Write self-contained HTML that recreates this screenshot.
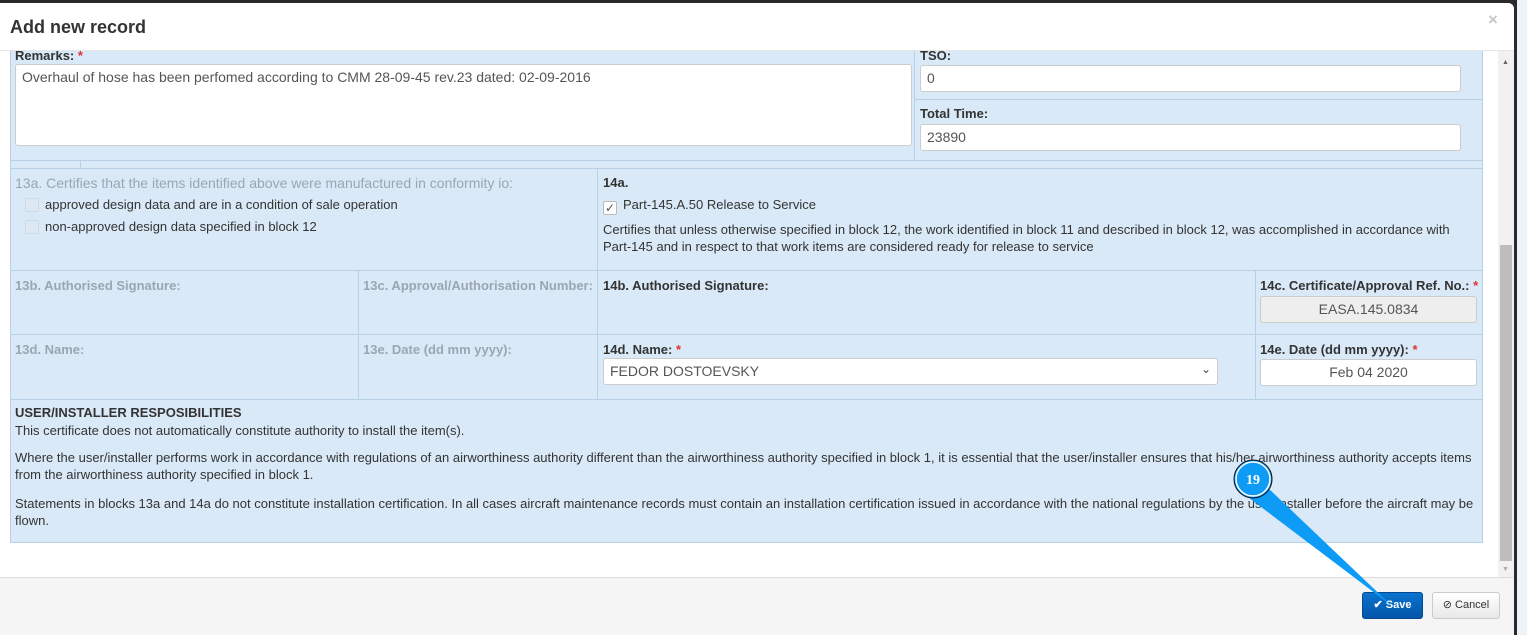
<!DOCTYPE html>
<html><head><meta charset="utf-8"><style>
*{box-sizing:border-box;margin:0;padding:0}
body{width:1527px;height:635px;overflow:hidden;background:#2a2a2a;font-family:"Liberation Sans",Arial,sans-serif;color:#333;position:relative}
.a{position:absolute}
.modal{left:0;top:3px;width:1514px;height:632px;background:#fff;border-top-right-radius:6px;overflow:hidden}
.hdr{left:0;top:0;width:1514px;height:48px;background:#fff;border-bottom:1px solid #e5e5e5;z-index:3}
.panel{left:10px;top:48px;width:1473px;height:492px;background:#d9e9f7;border:1px solid #b7d0e6;border-top:none}
.hl{position:absolute;height:1px;background:#b7d0e6}
.vl{position:absolute;width:1px;background:#b7d0e6}
.lbl{position:absolute;font-size:13px;font-weight:bold;color:#333}
.g{color:#9aa7b2}
.t{position:absolute;font-size:13px;color:#333;line-height:17px}
.inp{position:absolute;background:#fff;border:1px solid #ccc;border-radius:3px;font-size:14px;color:#555;padding:5px 6px;line-height:15px}
.red{color:#d33}
.cb{display:inline-block;width:14px;height:14px;border:1px solid #cfd8e0;background:#dde8f2;vertical-align:-3px;margin-right:6px;border-radius:2px}
</style></head><body>
<div class="a" style="left:1517px;top:0;width:10px;height:635px;background:#eef2f9"></div>
<div class="a modal">
 <div class="a hdr"><div class="a" style="left:10px;top:14px;font-size:18px;font-weight:bold;color:#333">Add new record</div>
 <div class="a" style="left:1488px;top:7px;font-size:17px;color:#c8c8c8;font-weight:bold">×</div></div>
 <div class="a panel">
  <div class="lbl" style="left:4px;top:-3px">Remarks: <span class="red">*</span></div>
  <div class="inp" style="left:4px;top:13px;width:897px;height:82px;">Overhaul of hose has been perfomed according to CMM 28-09-45 rev.23 dated: 02-09-2016</div>
  <div class="vl" style="left:903px;top:0;height:109px"></div>
  <div class="lbl" style="left:909px;top:-3px">TSO:</div>
  <div class="inp" style="left:909px;top:14px;width:541px;height:27px">0</div>
  <div class="hl" style="left:904px;top:48px;width:568px"></div>
  <div class="lbl" style="left:909px;top:55px">Total Time:</div>
  <div class="inp" style="left:909px;top:73px;width:541px;height:27px">23890</div>
  <div class="hl" style="left:0;top:109px;width:1472px"></div>
  <div class="vl" style="left:69px;top:109px;height:8px"></div>
  <div class="hl" style="left:0;top:117px;width:1472px"></div>
  <div class="vl" style="left:586px;top:117px;height:231px"></div>
  <div class="lbl g" style="left:4px;top:124px;font-weight:normal;font-size:14px">13a. Certifies that the items identified above were manufactured in conformity io:</div>
  <div class="t g" style="left:14px;top:145px"><span class="cb"></span>approved design data and are in a condition of sale operation</div>
  <div class="t g" style="left:14px;top:167px"><span class="cb"></span>non-approved design data specified in block 12</div>
  <div class="lbl" style="left:592px;top:124px">14a.</div>
  <div class="t" style="left:592px;top:145px"><span class="cb" style="background:#fff;border-color:#bbb;font-size:12px;line-height:12px;text-align:center;color:#555">✓</span>Part-145.A.50 Release to Service</div>
  <div class="t" style="left:592px;top:170px;width:870px">Certifies that unless otherwise specified in block 12, the work identified in block 11 and described in block 12, was accomplished in accordance with Part-145 and in respect to that work items are considered ready for release to service</div>
  <div class="hl" style="left:0;top:219px;width:1472px"></div>
  <div class="vl" style="left:347px;top:219px;height:129px"></div>
  <div class="vl" style="left:1244px;top:219px;height:129px"></div>
  <div class="lbl g" style="left:4px;top:227px">13b. Authorised Signature:</div>
  <div class="lbl g" style="left:352px;top:227px">13c. Approval/Authorisation Number:</div>
  <div class="lbl" style="left:592px;top:227px">14b. Authorised Signature:</div>
  <div class="lbl" style="left:1249px;top:227px">14c. Certificate/Approval Ref. No.: <span class="red">*</span></div>
  <div class="inp" style="left:1249px;top:245px;width:217px;height:27px;background:#eee;text-align:center">EASA.145.0834</div>
  <div class="hl" style="left:0;top:283px;width:1472px"></div>
  <div class="lbl g" style="left:4px;top:291px">13d. Name:</div>
  <div class="lbl g" style="left:352px;top:291px">13e. Date (dd mm yyyy):</div>
  <div class="lbl" style="left:592px;top:291px">14d. Name: <span class="red">*</span></div>
  <div class="inp" style="left:592px;top:307px;width:615px;height:27px">FEDOR DOSTOEVSKY<span style="position:absolute;right:6px;top:3px;font-size:12px;color:#444">&#8964;</span></div>
  <div class="lbl" style="left:1249px;top:291px">14e. Date (dd mm yyyy): <span class="red">*</span></div>
  <div class="inp" style="left:1249px;top:308px;width:217px;height:27px;text-align:center">Feb 04 2020</div>
  <div class="hl" style="left:0;top:348px;width:1472px"></div>
  <div class="lbl" style="left:4px;top:354px;font-size:13px">USER/INSTALLER RESPOSIBILITIES</div>
  <div class="t" style="left:4px;top:371px">This certificate does not automatically constitute authority to install the item(s).</div>
  <div class="t" style="left:4px;top:398px;width:1464px">Where the user/installer performs work in accordance with regulations of an airworthiness authority different than the airworthiness authority specified in block 1, it is essential that the user/installer ensures that his/her airworthiness authority accepts items from the airworthiness authority specified in block 1.</div>
  <div class="t" style="left:4px;top:444px;width:1464px">Statements in blocks 13a and 14a do not constitute installation certification. In all cases aircraft maintenance records must contain an installation certification issued in accordance with the national regulations by the user/installer before the aircraft may be flown.</div>
 </div>
 <div class="a" style="left:1498px;top:48px;width:16px;height:526px;background:#f1f1f1"></div>
 <div class="a" style="left:1500px;top:242px;width:12px;height:316px;background:#bdbdbd"></div>
 <div class="a" style="left:1502px;top:56px;font-size:7px;color:#666">▲</div>
 <div class="a" style="left:1502px;top:563px;font-size:7px;color:#aaa">▼</div>
 <div class="a" style="left:0;top:574px;width:1514px;height:58px;background:#f5f5f5;border-top:1px solid #ddd"></div>
 <div class="a" style="left:1362px;top:589px;width:61px;height:27px;background:linear-gradient(#0a73cf,#0356a8);border:1px solid #034a91;border-radius:3px;color:#fff;font-size:11px;line-height:25px;text-align:center;font-weight:bold">✔ Save</div>
 <div class="a" style="left:1432px;top:589px;width:68px;height:27px;background:linear-gradient(#fff,#e8e8e8);border:1px solid #ccc;border-radius:3px;color:#333;font-size:11px;line-height:25px;text-align:center">⊘ Cancel</div>
</div>
<svg class="a" style="left:0;top:0" width="1527" height="635"><polygon points="1236,488 1268,488 1392,606" fill="#0d9bf5"/><circle cx="1253" cy="479" r="19" fill="#0d9bf5" stroke="#111" stroke-width="1"/><circle cx="1253" cy="479" r="17" fill="none" stroke="#fff" stroke-width="1.5"/><text x="1253" y="484" font-family="Liberation Serif,serif" font-weight="bold" font-size="14" fill="#fff" text-anchor="middle">19</text></svg>
</body></html>
